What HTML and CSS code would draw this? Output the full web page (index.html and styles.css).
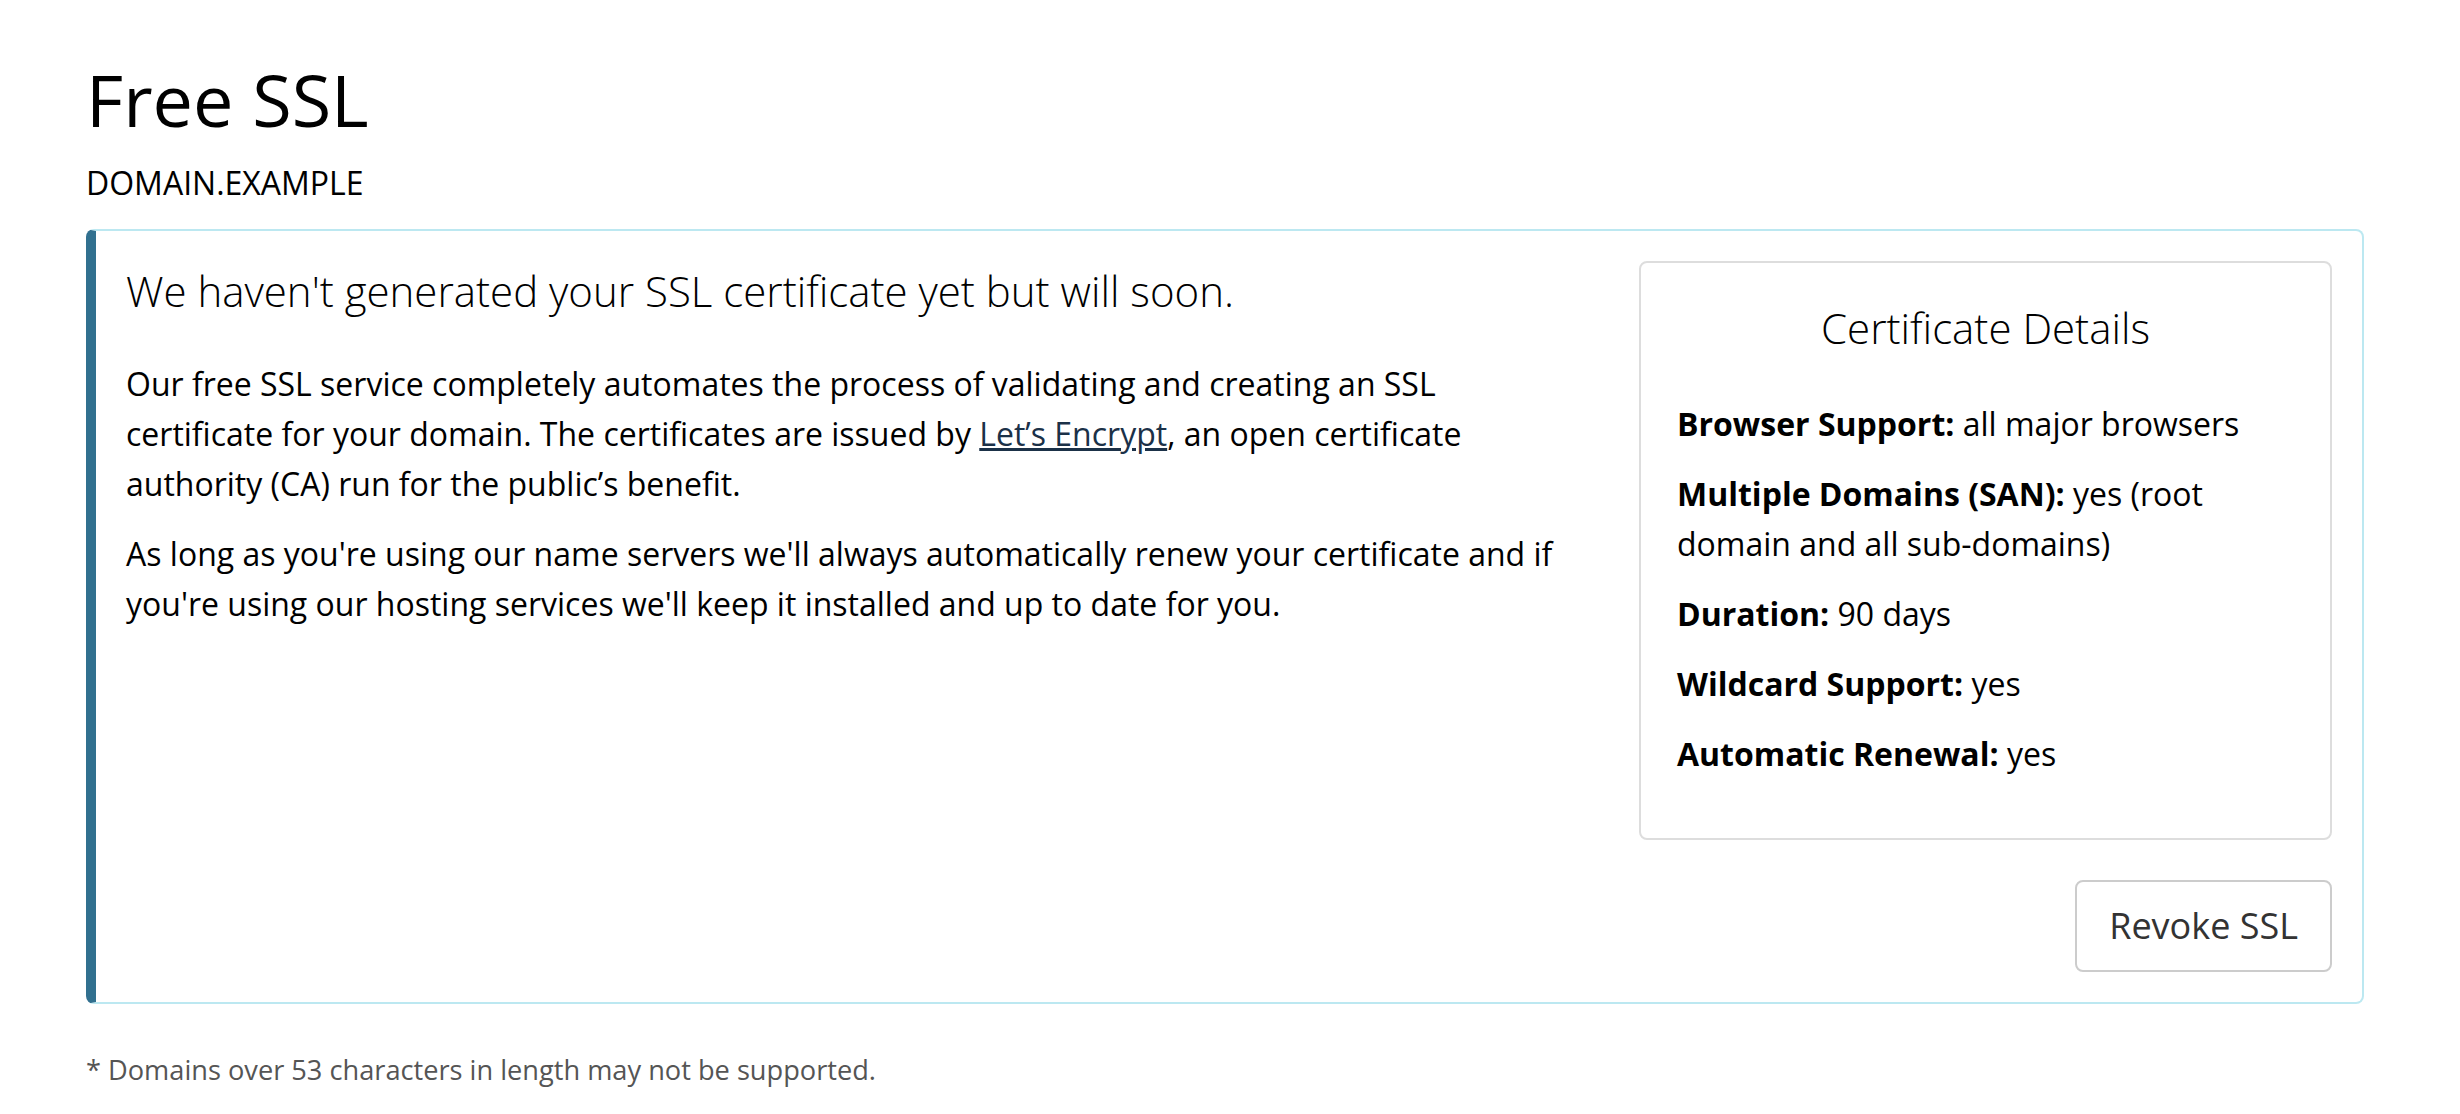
FILE: index.html
```html
<!DOCTYPE html>
<html lang="en">

<head>
    <meta charset="UTF-8">
    <meta name="viewport" content="width=device-width, initial-scale=1.0">
    <title>Free SSL</title>
    <link rel="stylesheet" href="styles.css">
</head>

<body>
    <div class="page">
        <h1 class="page-title">Free SSL</h1>
        <div class="domain-name">DOMAIN.EXAMPLE</div>

        <div class="callout">
            <div class="callout-main">
                <h3 class="callout-lead">We haven't generated your SSL certificate yet but will soon.</h3>
                <p>Our free SSL service completely automates the process of validating and creating an SSL certificate for your domain. The certificates are issued by <a href="#">Let’s Encrypt</a>, an open certificate authority (CA) run for the public’s benefit.</p>
                <p>As long as you're using our name servers we'll always automatically renew your certificate and if you're using our hosting services we'll keep it installed and up to date for you.</p>
            </div>
            <div class="callout-side">
                <div class="details">
                    <h4 class="details-title">Certificate Details</h4>
                    <p><strong>Browser Support:</strong> all major browsers</p>
                    <p><strong>Multiple Domains (SAN):</strong> yes (root domain and all sub-domains)</p>
                    <p><strong>Duration:</strong> 90 days</p>
                    <p><strong>Wildcard Support:</strong> yes</p>
                    <p><strong>Automatic Renewal:</strong> yes</p>
                </div>
                <div class="actions">
                    <button type="button" class="btn">Revoke SSL</button>
                </div>
            </div>
        </div>

        <p class="footnote">* Domains over 53 characters in length may not be supported.</p>
    </div>
</body>

</html>
```

FILE: styles.css
```css
body {
    margin: 0;
    padding: 0;
    font-family: "Open Sans", "Liberation Sans", sans-serif;
    color: #000;
    background-color: #fff;
}

.page {
    padding: 60px 96px 0 86px;
}

.page-title {
    margin: 0;
    font-size: 72px;
    font-weight: 400;
    line-height: 1.1;
}

.domain-name {
    margin-top: 20px;
    font-size: 32px;
    line-height: 1.5;
}

.callout {
    display: flex;
    gap: 78px;
    margin-top: 22px;
    padding: 30px;
    border: 2px solid #bce8f1;
    border-left: 10px solid #31708f;
    border-radius: 8px;
}

.callout-main {
    flex: 1;
}

.callout-lead {
    margin: 0 0 38px;
    font-size: 42px;
    font-weight: 300;
    line-height: 60px;
}

p {
    margin: 0 0 20px;
    font-size: 32px;
    line-height: 50px;
}

.callout-main p:last-child {
    margin-bottom: 0;
}

a {
    color: #1b3148;
    text-decoration: underline;
}

.callout-side {
    width: 693px;
}

.details {
    padding: 38px 36px 39px;
    border: 2px solid #ddd;
    border-radius: 8px;
}

.details-title {
    margin: 0 0 44px;
    font-size: 42px;
    font-weight: 300;
    line-height: 54px;
    text-align: center;
}

.actions {
    display: flex;
    justify-content: flex-end;
    margin-top: 40px;
}

.btn {
    padding: 20px 32px;
    font-family: inherit;
    font-size: 36px;
    line-height: 48px;
    color: #333;
    background-color: #fff;
    border: 2px solid #ccc;
    border-radius: 8px;
    cursor: pointer;
}

.footnote {
    margin-top: 46px;
    font-size: 27.2px;
    line-height: 40px;
    color: #555;
}
```
